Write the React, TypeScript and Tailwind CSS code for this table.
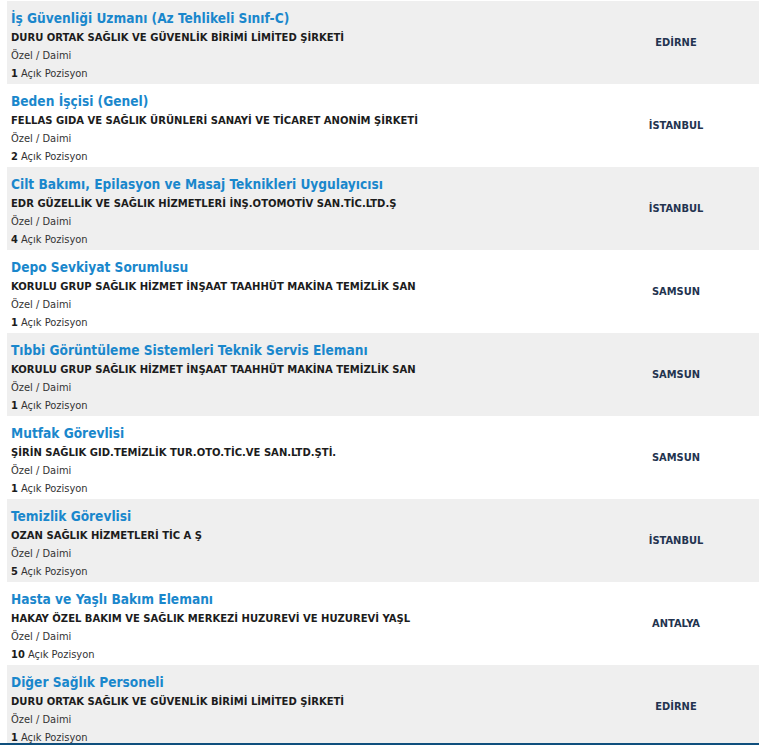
import React from "react";

type Job = { title: string; company: string; count: number; city: string };

const jobs: Job[] = [
  { title: "İş Güvenliği Uzmanı (Az Tehlikeli Sınıf-C)", company: "DURU ORTAK SAĞLIK VE GÜVENLİK BİRİMİ LİMİTED ŞİRKETİ", count: 1, city: "EDİRNE" },
  { title: "Beden İşçisi (Genel)", company: "FELLAS GIDA VE SAĞLIK ÜRÜNLERİ SANAYİ VE TİCARET ANONİM ŞİRKETİ", count: 2, city: "İSTANBUL" },
  { title: "Cilt Bakımı, Epilasyon ve Masaj Teknikleri Uygulayıcısı", company: "EDR GÜZELLİK VE SAĞLIK HİZMETLERİ İNŞ.OTOMOTİV SAN.TİC.LTD.Ş", count: 4, city: "İSTANBUL" },
  { title: "Depo Sevkiyat Sorumlusu", company: "KORULU GRUP SAĞLIK HİZMET İNŞAAT TAAHHÜT MAKİNA TEMİZLİK SAN", count: 1, city: "SAMSUN" },
  { title: "Tıbbi Görüntüleme Sistemleri Teknik Servis Elemanı", company: "KORULU GRUP SAĞLIK HİZMET İNŞAAT TAAHHÜT MAKİNA TEMİZLİK SAN", count: 1, city: "SAMSUN" },
  { title: "Mutfak Görevlisi", company: "ŞİRİN SAĞLIK GID.TEMİZLİK TUR.OTO.TİC.VE SAN.LTD.ŞTİ.", count: 1, city: "SAMSUN" },
  { title: "Temizlik Görevlisi", company: "OZAN SAĞLIK HİZMETLERİ TİC A Ş", count: 5, city: "İSTANBUL" },
  { title: "Hasta ve Yaşlı Bakım Elemanı", company: "HAKAY ÖZEL BAKIM VE SAĞLIK MERKEZİ HUZUREVİ VE HUZUREVİ YAŞL", count: 10, city: "ANTALYA" },
  { title: "Diğer Sağlık Personeli", company: "DURU ORTAK SAĞLIK VE GÜVENLİK BİRİMİ LİMİTED ŞİRKETİ", count: 1, city: "EDİRNE" },
];

export default function App() {
  return (
    <div
      className="relative w-[759px] h-[745px] overflow-hidden bg-white"
      style={{ fontFamily: '"DejaVu Sans Condensed", "DejaVu Sans", Verdana, sans-serif' }}
    >
      <div className="flex flex-col pl-[7px] pt-[1px]">
        {jobs.map((j, i) => (
          <div
            key={i}
            className={`flex h-[83px] shrink-0 ${i % 2 === 0 ? "bg-[#efefef]" : "bg-white"}`}
          >
            <div className="flex-1 pl-[4px] pt-[6px]">
              <div className="text-[13.6px] leading-[22px] font-bold text-[#1a87cc] whitespace-nowrap">
                {j.title}
              </div>
              <div className="text-[11.15px] leading-[18px] font-bold text-[#1c1c1c] whitespace-nowrap">
                {j.company}
              </div>
              <div className="text-[11px] leading-[18px] text-[#333333]">Özel / Daimi</div>
              <div className="text-[11px] leading-[18px] text-[#333333]">
                <span className="font-bold text-[#1c1c1c]">{j.count}</span> Açık Pozisyon
              </div>
            </div>
            <div className="w-[166px] flex items-center justify-center pt-[1px] text-[11px] font-bold text-[#23334f]">
              {j.city}
            </div>
          </div>
        ))}
      </div>
      <div className="absolute left-0 right-0 bottom-0 h-[2px] bg-[#0f4f7d]" />
    </div>
  );
}
